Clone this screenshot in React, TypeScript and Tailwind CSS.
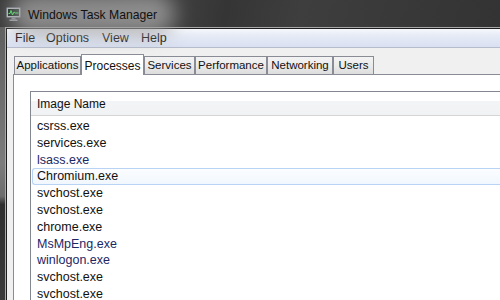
import React from "react";

const rows: { name: string; blue?: boolean; sel?: boolean }[] = [
  { name: "csrss.exe" },
  { name: "services.exe" },
  { name: "lsass.exe", blue: true },
  { name: "Chromium.exe", sel: true },
  { name: "svchost.exe" },
  { name: "svchost.exe" },
  { name: "chrome.exe" },
  { name: "MsMpEng.exe", blue: true },
  { name: "winlogon.exe", blue: true },
  { name: "svchost.exe" },
  { name: "svchost.exe" },
];

const tabs = [
  { name: "Applications", w: "w-[67px]" },
  { name: "Processes", w: "w-[63px]", sel: true },
  { name: "Services", w: "w-[51px]" },
  { name: "Performance", w: "w-[72px]" },
  { name: "Networking", w: "w-[66px]" },
  { name: "Users", w: "w-[41px]" },
];

function TmIcon() {
  return (
    <svg width="15" height="14" viewBox="0 0 15 14">
      <rect x="0.5" y="0.5" width="14" height="10" rx="1" fill="#b8bcc4" stroke="#6b7079" />
      <rect x="2" y="2" width="11" height="7" fill="#0b1a10" />
      <polyline points="2.5,6.5 4,6.5 5,3.5 6.5,8 8,5 9.5,6 12.5,6" fill="none" stroke="#3dff5a" strokeWidth="1" />
      <rect x="5.5" y="10.5" width="4" height="2" fill="#8a8f98" />
      <rect x="3.5" y="12.5" width="8" height="1.5" fill="#9aa0a8" />
    </svg>
  );
}

export default function App() {
  return (
    <div className="w-[500px] h-[300px] overflow-hidden flex flex-col bg-[#343434] font-['Liberation_Sans',Arial,sans-serif]">
      {/* Title bar */}
      <div className="h-[27px] flex items-center bg-[linear-gradient(100deg,#3a3a3a_0%,#454545_30%,#353535_45%,#3e3e3e_60%,#333333_100%)]">
        <div className="ml-[6px] mt-[1px] flex">
          <TmIcon />
        </div>
        <div className="relative ml-[7px] mt-[1px]">
          <div className="absolute -inset-x-[18px] -inset-y-[9px] rounded-full bg-[#a0a0a0] blur-[10px] opacity-80" />
          <span className="relative text-[12.2px] text-[#111]">Windows Task Manager</span>
        </div>
      </div>
      <div className="flex-1 flex min-h-0">
        {/* left frame */}
        <div className="w-[5px] bg-[linear-gradient(to_bottom,#5e5e5e_0%,#7c7c7c_50%,#6c6c6c_62%,#2e2e2e_65%,#3a3a3a_100%)]" />
        <div className="flex-1 flex flex-col border-l border-t border-[#a9a9a9] min-w-0">
          <div className="flex-1 flex flex-col border-l border-t border-[#1e1e1e] min-h-0">
            {/* menu bar */}
            <div className="h-[19px] flex items-center border-b border-[#b6bccb] bg-[linear-gradient(to_bottom,#f6f8fc_0%,#e6ebf6_35%,#d9e0f1_100%)] text-[12.5px] text-[#111]">
              <span className="ml-[8px] w-[31px]">File</span>
              <span className="w-[56px]">Options</span>
              <span className="w-[39px]">View</span>
              <span>Help</span>
            </div>
            {/* body */}
            <div className="flex-1 flex flex-col bg-[#f0f0f0] pl-[6px] min-h-0">
              <div className="flex items-end h-[26px] pl-[1px] text-[11.5px] text-[#111]">
                {tabs.map((t) =>
                  t.sel ? (
                    <div
                      key={t.name}
                      className={`${t.w} relative z-10 -mb-px h-[21px] bg-white border border-b-0 border-[#898c95] flex items-start justify-center pt-[2px] text-[12px]`}
                    >
                      {t.name}
                    </div>
                  ) : (
                    <div
                      key={t.name}
                      className={`${t.w} h-[18px] border border-b-0 border-[#898c95] bg-[linear-gradient(to_bottom,#f3f3f3_0%,#ebebeb_50%,#dddddd_100%)] flex items-center justify-center pt-[1px]`}
                    >
                      {t.name}
                    </div>
                  )
                )}
              </div>
              <div className="flex-1 bg-white border-l border-t border-[#898c95] pl-[16px] pt-[16px] min-h-0">
                <div className="h-full bg-white border-l border-t border-[#828790]">
                  <div className="h-[24px] flex items-center pl-[6px] border-b border-[#d5d5d5] bg-[linear-gradient(to_bottom,#ffffff_0%,#ffffff_40%,#f3f4f6_40%,#f1f2f4_100%)] text-[12px] text-[#111]">
                    Image Name
                  </div>
                  <div className="pt-[2px] text-[12.5px]">
                    {rows.map((r, i) =>
                      r.sel ? (
                        <div
                          key={i}
                          className="h-[16.8px] ml-[1px] pl-[4px] flex items-center border border-r-0 border-[#b8d3f3] rounded-l-[3px] bg-[linear-gradient(to_bottom,#fbfdff,#f1f7fe)] text-[#111]"
                        >
                          {r.name}
                        </div>
                      ) : (
                        <div
                          key={i}
                          className={`h-[16.8px] ml-[1px] pl-[5px] flex items-center ${r.blue ? "text-[#1c2766]" : "text-[#111]"}`}
                        >
                          {r.name}
                        </div>
                      )
                    )}
                  </div>
                </div>
              </div>
            </div>
          </div>
        </div>
      </div>
    </div>
  );
}
